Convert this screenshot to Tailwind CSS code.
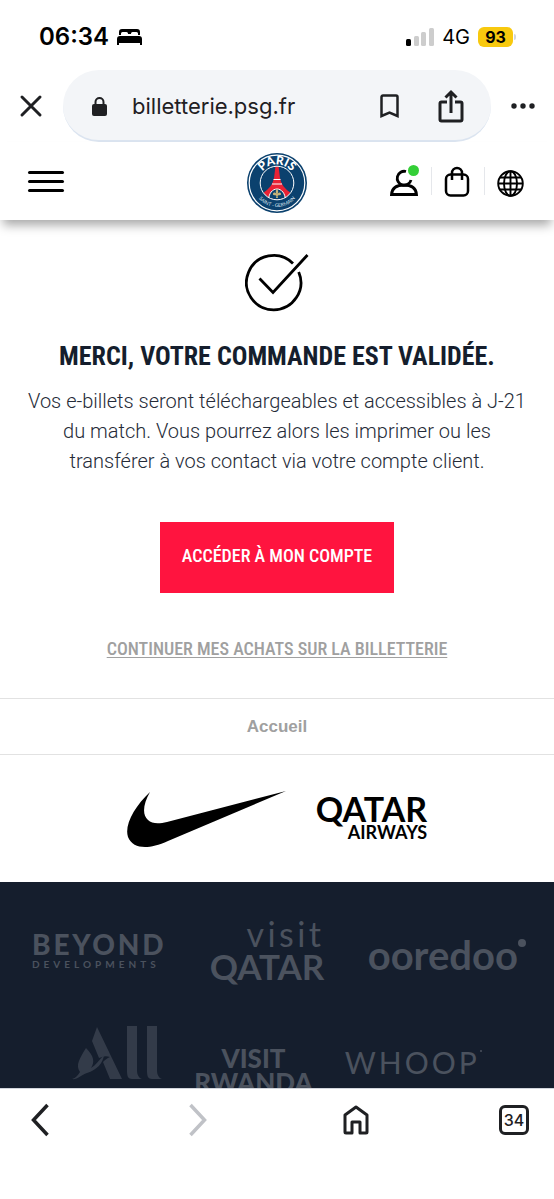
<!DOCTYPE html>
<html lang="fr">
<head>
    <meta charset="UTF-8">
    <meta name="viewport" content="width=device-width, initial-scale=1.0">
    <title>Billetterie PSG - Commande validée</title>
    <script src="https://cdn.jsdelivr.net/npm/@tailwindcss/browser@4"></script>
</head>
<body class="flex h-screen flex-col overflow-hidden bg-white font-['Inter','Liberation_Sans',sans-serif] text-[#1f2023]">

    <!-- Status bar -->
    <div class="flex h-[70px] shrink-0 items-center justify-between pt-1 pr-[38px] pl-[39px] text-black">
        <div class="flex items-center gap-2">
            <span class="text-2xl font-semibold">06:34</span>
            <svg class="h-[18px] w-[25px]" viewBox="0 0 25 18" fill="currentColor" aria-hidden="true">
                <path d="M2 7V4a3 3 0 0 1 3-3h15a3 3 0 0 1 3 3v3h-2V5.500a1.500 1.500 0 0 0-1.500-1.500h-4A1.500 1.500 0 0 0 14 5.500V6h-3v-.5A1.500 1.500 0 0 0 9.500 4h-4A1.500 1.500 0 0 0 4 5.500V7z"/>
                <path d="M3 8h19a3 3 0 0 1 3 3v6h-2v-2H2v2H0v-6a3 3 0 0 1 3-3z"/>
            </svg>
        </div>
        <div class="flex items-center">
            <svg class="h-[18px] w-7" viewBox="0 0 28 18" aria-hidden="true">
                <rect x="0" y="11" width="5" height="7" rx="1.500" fill="#000"/>
                <rect x="8" y="8" width="5" height="10" rx="1.500" fill="#cdcdcd"/>
                <rect x="15" y="4" width="5" height="14" rx="1.500" fill="#cdcdcd"/>
                <rect x="23" y="0" width="5" height="18" rx="1.500" fill="#cdcdcd"/>
            </svg>
            <span class="ml-2 text-xl">4G</span>
            <span class="ml-2 flex h-5 w-[35px] items-center justify-center rounded-md bg-[#f8c90e] text-base font-bold">93</span>
            <span class="ml-px h-1.5 w-0.5 rounded-r bg-gray-300"></span>
        </div>
    </div>

    <!-- Browser toolbar -->
    <div class="flex shrink-0 items-center">
        <button type="button" aria-label="Fermer" class="flex w-[63px] justify-center pr-0.5">
            <svg class="h-6 w-6" viewBox="0 0 24 24" fill="none" stroke="currentColor" stroke-width="3" stroke-linecap="round" aria-hidden="true">
                <path d="M3 3l18 18M21 3L3 21"/>
            </svg>
        </button>
        <div class="flex h-[72px] flex-1 items-center overflow-hidden rounded-full border-b-2 border-[#dbe4f0] bg-[#f3f5f8] pt-0.5 pr-[27px] pl-7">
            <svg class="h-[19px] w-[17px]" viewBox="0 0 17 19" aria-hidden="true">
                <rect x="1" y="7" width="15" height="12" rx="2" fill="currentColor"/>
                <path d="M4.500 8V5a4 4 0 0 1 8 0v3" fill="none" stroke="currentColor" stroke-width="2"/>
            </svg>
            <span class="ml-6 flex-1 text-[22px]">billetterie.psg.fr</span>
            <button type="button" aria-label="Ajouter aux favoris">
                <svg class="h-6 w-[19px]" viewBox="0 0 19 24" fill="none" stroke="currentColor" stroke-width="2.500" aria-hidden="true">
                    <path d="M1.500 22V3a1.500 1.500 0 0 1 1.500-1.500h13a1.500 1.500 0 0 1 1.500 1.500v19l-8-3.500z"/>
                </svg>
            </button>
            <button type="button" aria-label="Partager" class="ml-[39px]">
                <svg class="h-[34px] w-[26px]" viewBox="0 0 26 34" fill="none" stroke="currentColor" stroke-width="3" aria-hidden="true">
                    <path d="M9 13H3.500A1.500 1.500 0 0 0 2 14.500v16A1.500 1.500 0 0 0 3.500 32h19a1.500 1.500 0 0 0 1.500-1.500v-16a1.500 1.500 0 0 0-1.500-1.500H17M13 24V3M7.500 8.500L13 3l5.500 5.500"/>
                </svg>
            </button>
        </div>
        <button type="button" aria-label="Plus d'options" class="flex w-[63px] justify-center">
            <svg class="h-1.5 w-6" viewBox="0 0 24 6" fill="currentColor" aria-hidden="true">
                <circle cx="3" cy="3" r="2.700"/><circle cx="12" cy="3" r="2.700"/><circle cx="21" cy="3" r="2.700"/>
            </svg>
        </button>
    </div>

    <!-- Site header -->
    <header class="z-10 grid h-[78px] shrink-0 grid-cols-[1fr_auto_1fr] items-center bg-white px-7 text-black shadow-[0_8px_10px_-3px_rgba(0,0,0,0.35)]">
        <button type="button" aria-label="Menu" class="flex w-9 flex-col gap-1.5">
            <span class="h-[3px] rounded-sm bg-black"></span>
            <span class="h-[3px] rounded-sm bg-black"></span>
            <span class="h-[3px] rounded-sm bg-black"></span>
        </button>
        <a href="#" aria-label="Paris Saint-Germain" class="mt-1">
            <svg class="h-[60px] w-[60px]" viewBox="0 0 60 60">
                <defs>
                    <path id="arc-top" d="M11.500 30a18.500 18.500 0 0 1 37 0"/>
                    <path id="arc-bottom" d="M6 30a24 24 0 0 0 48 0"/>
                    <clipPath id="disc"><circle cx="30" cy="30" r="16.500"/></clipPath>
                </defs>
                <circle cx="30" cy="30" r="30" fill="#0b416e"/>
                <circle cx="30" cy="30" r="27.800" fill="none" stroke="#fff" stroke-width="1.200"/>
                <g clip-path="url(#disc)">
                    <path d="M28.500 13h3l1.500 12c1.500 7 5 11 11 15l-6 8H22l-6-8c6-4 9.500-8 11-15z" fill="#e92235"/>
                    <path d="M26.500 26.500h7M25 31h10" stroke="#fff" stroke-width="1"/>
                    <path d="M21.500 48c0-16 17-16 17 0z" fill="#0b416e" stroke="#fff" stroke-width="1"/>
                </g>
                <circle cx="30" cy="30" r="16.800" fill="none" stroke="#fff" stroke-width="1"/>
                <path d="M30 36c-2 2-1 4-.5 5-1-2-3-2-3.500-.5s1 2 2 1.500l1.500 1-.5 2h2l-.5-2 1.500-1c1 .5 2.500 0 2-1.500s-2.500-1.500-3.500.5c.5-1 1.500-3-.5-5z" fill="#c7b278"/>
                <text fill="#fff" font-family="Lato, sans-serif" font-size="12" font-weight="900" text-anchor="middle"><textPath href="#arc-top" startOffset="50%">PARIS</textPath></text>
                <text fill="#dce6ee" font-family="Lato, sans-serif" font-size="5" text-anchor="middle"><textPath href="#arc-bottom" startOffset="50%">SAINT - GERMAIN</textPath></text>
            </svg>
        </a>
        <div class="flex items-center justify-end pr-0.5">
            <button type="button" aria-label="Mon compte" class="relative mt-1">
                <svg class="h-7 w-[30px]" viewBox="0 0 30 28" fill="none" stroke="#000" stroke-width="2.800" aria-hidden="true">
                    <path d="M17 2.500a7 7 0 1 0 5 8.500"/>
                    <path d="M2.500 25.500c.5-6 5-9.500 12.500-9.500s12 3.500 12.500 9.500z"/>
                </svg>
                <span class="absolute -top-1 right-0 h-[11px] w-[11px] rounded-full bg-[#34cf37]"></span>
            </button>
            <span class="mr-3 ml-3 h-7 w-px bg-gray-200"></span>
            <button type="button" aria-label="Panier">
                <svg class="h-[31px] w-[26px]" viewBox="0 0 26 31" fill="none" stroke="#000" stroke-width="2.500" aria-hidden="true">
                    <rect x="2" y="8.500" width="22" height="21" rx="4.500"/>
                    <path d="M8 14V7a5 5 0 0 1 10 0v7"/>
                </svg>
            </button>
            <span class="mr-3 ml-3.5 h-7 w-px bg-gray-200"></span>
            <button type="button" aria-label="Langue" class="mt-1">
                <svg class="h-[27px] w-[27px]" viewBox="0 0 27 27" fill="none" stroke="#000" stroke-width="1.900" aria-hidden="true">
                    <circle cx="13.500" cy="13.500" r="12.300"/>
                    <ellipse cx="13.500" cy="13.500" rx="6.500" ry="12.300"/>
                    <path d="M13.500 1v25M1 13.500h25M3 7.500h21M3 19.500h21"/>
                </svg>
            </button>
        </div>
    </header>

    <main class="flex-1 overflow-hidden">
        <section class="flex flex-col items-center px-7 pt-[33px] pb-[34px] text-center">
            <svg class="h-[59px] w-[64px]" viewBox="0 0 64 59" fill="none" stroke="#000" stroke-width="2.800" aria-hidden="true">
                <path d="M48 10.500A27.200 27.200 0 1 0 53.700 19"/>
                <path d="M14.500 25.500L28 39.500 62.500 2"/>
            </svg>
            <h1 class="mt-6 font-['Roboto_Condensed',sans-serif] text-[26px] leading-10 font-bold text-[#151e2d]">MERCI, VOTRE COMMANDE EST VALIDÉE.</h1>
            <p class="mt-2.5 font-['Roboto',sans-serif] text-xl leading-[30px] font-light text-[#252b38]">Vos e-billets seront téléchargeables et accessibles à J-21 du match. Vous pourrez alors les imprimer ou les transférer à vos contact via votre compte client.</p>
            <a href="#" class="mt-[46px] bg-[#ff143f] px-[22px] pt-[19px] pb-[22px] font-['Roboto_Condensed',sans-serif] text-lg leading-[30px] font-medium text-white">ACCÉDER À MON COMPTE</a>
            <a href="#" class="mt-[41px] font-['Roboto_Condensed',sans-serif] text-lg leading-[30px] font-medium text-[#a0a0a0] underline underline-offset-2">CONTINUER MES ACHATS SUR LA BILLETTERIE</a>
        </section>

        <nav class="border-y border-[#e2e2e2] py-[15px] text-center leading-6">
            <a href="#" class="font-['Liberation_Sans',sans-serif] text-[17px] font-bold text-[#a0a0a0]">Accueil</a>
        </nav>

        <!-- Main sponsors -->
        <div class="flex h-[127px] items-center justify-center gap-[30px] text-black">
            <svg class="h-14 w-[159px]" viewBox="0 0 159 56" fill="currentColor" role="img" aria-label="Nike">
                <path d="M159 0L41 50C32 54 24 56 18 56 10 56 4 53 1 46-3 34 8 15 23 1c-7 12-8 23-2 28 4 4 11 4 19 2z"/>
            </svg>
            <div class="flex flex-col items-end font-['Lato',sans-serif]">
                <span class="text-[34px] leading-[26px] font-bold">QATAR</span>
                <span class="text-lg leading-5 font-bold">AIRWAYS</span>
            </div>
        </div>

        <!-- Partners -->
        <footer class="bg-[#151e2d] pt-9 text-[#4b525e]">
            <div class="flex items-center justify-between pr-7 pl-8">
                <div class="font-['Lato',sans-serif]">
                    <div class="text-[28px] leading-7 font-black tracking-widest">BEYOND</div>
                    <div class="text-[10px] leading-3 font-bold tracking-[4px]">DEVELOPMENTS</div>
                </div>
                <div class="flex flex-col items-end font-['Lato',sans-serif]">
                    <span class="text-[34px] leading-8 tracking-widest">visit</span>
                    <span class="text-[35px] leading-8 font-bold">QATAR</span>
                </div>
                <div class="flex items-start pt-2.5">
                    <span class="font-['Lato',sans-serif] text-[40px] leading-10 font-bold">ooredoo</span>
                    <span class="mt-1 h-2 w-2 rounded-full bg-current"></span>
                </div>
            </div>
            <div class="mt-9 flex items-start justify-center gap-8">
                <svg class="mt-2 h-[55px] w-[90px] text-[#333b49]" viewBox="0 0 90 55" fill="currentColor" role="img" aria-label="All">
                    <path d="M25 1L50 53H38L31 36c2-2 4-4 7-5-5-2-8 0-11 1l-7-17z"/>
                    <path d="M14 22c8 8 9 14 5 20 5-3 8-8 13-13-1 8-7 15-17 18C9 49 5 54 0 53c4-1 6-4 8-7-5-7 0-14 6-24z"/>
                    <path d="M55 0h10v44c0 5 2 8 5 9H60c-4 0-5-3-5-8zM75 0h10v44c0 5 2 8 5 9H80c-4 0-5-3-5-8z"/>
                </svg>
                <div class="pt-7 text-center font-['Lato',sans-serif] text-[26px] leading-6 font-black">VISIT<br>RWANDA</div>
                <div class="flex items-start pt-7 font-['Lato',sans-serif] text-[30px] leading-8">
                    <span class="tracking-widest">WHOOP</span>
                    <span class="mt-1 h-0.5 w-0.5 rounded-full bg-current"></span>
                </div>
            </div>
        </footer>
    </main>

    <!-- Browser bottom bar -->
    <nav class="z-10 flex h-[111px] shrink-0 items-start justify-between border-t border-gray-300 bg-white px-[25px] pt-[14px]">
        <button type="button" aria-label="Précédent" class="flex w-[30px] justify-center">
            <svg class="h-[34px] w-[18px]" viewBox="0 0 18 34" fill="none" stroke="currentColor" stroke-width="3.500" aria-hidden="true"><path d="M16.500 2L2.500 17l14 15"/></svg>
        </button>
        <button type="button" aria-label="Suivant" disabled class="flex w-[30px] justify-center text-[#c0c2c7]">
            <svg class="h-[34px] w-[18px]" viewBox="0 0 18 34" fill="none" stroke="currentColor" stroke-width="3.500" aria-hidden="true"><path d="M1.500 2l14 15-14 15"/></svg>
        </button>
        <button type="button" aria-label="Accueil" class="flex w-[30px] justify-center">
            <svg class="h-[34px] w-[26px]" viewBox="0 0 26 34" fill="none" stroke="currentColor" stroke-width="3" stroke-linejoin="round" aria-hidden="true">
                <path d="M2 29V12L13 4l11 8v17a1 1 0 0 1-1 1h-6V19H9v11H3a1 1 0 0 1-1-1z"/>
            </svg>
        </button>
        <button type="button" aria-label="Onglets ouverts" class="mt-0.5 flex h-[30px] w-[30px] items-center justify-center rounded-md border-[3px] border-current text-base font-medium">34</button>
    </nav>
</body>
</html>
